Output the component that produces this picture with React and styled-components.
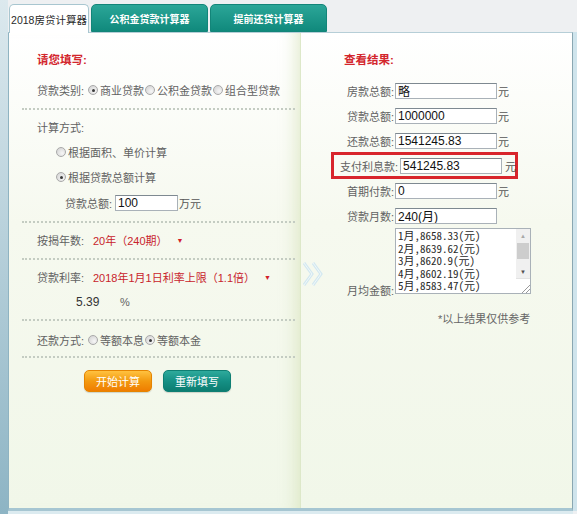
import React from "react";
import styled, { createGlobalStyle, css } from "styled-components";

const GlobalStyle = createGlobalStyle`
  html, body {
    margin: 0;
    padding: 0;
  }
  body {
    background: #eef0f2;
    font-family: "Liberation Sans", "Noto Sans CJK SC", sans-serif;
    font-size: 11px;
    color: #626262;
  }
`;

// 等额本金 schedule, 100万 / 240期 / 5.39%
const schedule = (() => {
  const principal = 1000000;
  const months = 240;
  const rate = 0.0539 / 12;
  const base = principal / months;
  const lines = [];
  for (let i = 0; i < months; i++) {
    const pay = base + (principal - base * i) * rate;
    lines.push(`${i + 1}月,${Math.round(pay * 100) / 100}(元)`);
  }
  return lines.join("\n");
})();

function App() {
  return (
    <>
      <GlobalStyle />
      <Page>
        <TabBar>
          <Tab $active $w={80}>2018房贷计算器</Tab>
          <Tab $w={117}>公积金贷款计算器</Tab>
          <Tab $w={117}>提前还贷计算器</Tab>
        </TabBar>
        <Panel>
          <Column $left>
            <Title>请您填写:</Title>

            <Row $mt={10}>
              <Label>贷款类别:</Label>
              <Radio $checked $first />
              <span>商业贷款</span>
              <Radio />
              <span>公积金贷款</span>
              <Radio />
              <span>组合型贷款</span>
            </Row>
            <Divider $mt={8} />

            <Row $mt={7}>
              <Label>计算方式:</Label>
            </Row>
            <Row $mt={5} $indent={46}>
              <Radio />
              <span>根据面积、单价计算</span>
            </Row>
            <Row $mt={5} $indent={46}>
              <Radio $checked />
              <span>根据贷款总额计算</span>
            </Row>
            <Row $mt={6} $indent={56}>
              <Label $w={50}>贷款总额:</Label>
              <TextInput $w={63} value="100" readOnly />
              <Unit>万元</Unit>
            </Row>
            <Divider $mt={8} />

            <Row $mt={7}>
              <Label $w={56}>按揭年数:</Label>
              <RedValue>20年（240期）</RedValue>
              <Caret>▼</Caret>
            </Row>
            <Divider $mt={8} />

            <Row $mt={7}>
              <Label $w={56}>贷款利率:</Label>
              <RedValue>2018年1月1日利率上限（1.1倍）</RedValue>
              <Caret>▼</Caret>
            </Row>
            <Row $mt={5} $indent={67}>
              <RateValue>5.39</RateValue>
              <span>%</span>
            </Row>
            <Divider $mt={7} />

            <Row $mt={9}>
              <Label>还款方式:</Label>
              <Radio $first />
              <span>等额本息</span>
              <Radio $checked />
              <span>等额本金</span>
            </Row>
            <Divider $mt={6} />

            <ButtonRow>
              <Button $tone="orange">开始计算</Button>
              <Button $tone="teal">重新填写</Button>
            </ButtonRow>
          </Column>

          <Column>
            <Chevrons width="22" height="24" viewBox="0 0 22 24">
              <polyline points="2,1 10,12 2,23" fill="none" stroke="#d3e8f0" strokeWidth="3" />
              <polyline points="2,1 10,12 2,23" fill="none" stroke="#f0f8fa" strokeWidth="1" />
              <polyline points="11,1 19,12 11,23" fill="none" stroke="#d3e8f0" strokeWidth="3" />
              <polyline points="11,1 19,12 11,23" fill="none" stroke="#f0f8fa" strokeWidth="1" />
            </Chevrons>
            <Title $right>查看结果:</Title>
            <Results>
              <ResultRow>
                <Label $w={50} $right>房款总额:</Label>
                <TextInput $w={102} value="略" readOnly />
                <Unit>元</Unit>
              </ResultRow>
              <ResultRow>
                <Label $w={50} $right>贷款总额:</Label>
                <TextInput $w={102} value="1000000" readOnly />
                <Unit>元</Unit>
              </ResultRow>
              <ResultRow>
                <Label $w={50} $right>还款总额:</Label>
                <TextInput $w={102} value="1541245.83" readOnly />
                <Unit>元</Unit>
              </ResultRow>
              <Highlight>
                <Label>支付利息款:</Label>
                <TextInput $w={102} value="541245.83" readOnly />
                <Unit>元</Unit>
              </Highlight>
              <ResultRow>
                <Label $w={50} $right>首期付款:</Label>
                <TextInput $w={102} value="0" readOnly />
                <Unit>元</Unit>
              </ResultRow>
              <ResultRow>
                <Label $w={50} $right>贷款月数:</Label>
                <TextInput $w={102} value="240(月)" readOnly />
              </ResultRow>
              <ListRow>
                <Label $w={50} $right>月均金额:</Label>
                <ListBox>
                  <Schedule value={schedule} readOnly />
                  <ScrollBar>
                    <Arrow>▲</Arrow>
                    <Track>
                      <Thumb />
                    </Track>
                    <Arrow $dark>▼</Arrow>
                    <Grip>
                      <svg width="10" height="10" viewBox="0 0 10 10">
                        <line x1="2" y1="10" x2="10" y2="2" stroke="#9a9a9a" strokeWidth="1" />
                        <line x1="6" y1="10" x2="10" y2="6" stroke="#9a9a9a" strokeWidth="1" />
                      </svg>
                    </Grip>
                  </ScrollBar>
                </ListBox>
              </ListRow>
            </Results>
            <Note>*以上结果仅供参考</Note>
          </Column>
        </Panel>
      </Page>
    </>
  );
}

const Page = styled.div`
  width: 577px;
  height: 514px;
  box-sizing: border-box;
  padding-top: 4px;
  border-left: 8px solid #b5d0da;
  border-image: linear-gradient(#dce9ee, #8db4c4) 1;
  display: flex;
  flex-direction: column;
`;

const TabBar = styled.div`
  display: flex;
  align-items: flex-end;
  gap: 2px;
  height: 28px;
  padding-left: 1px;
`;

const Tab = styled.div`
  position: relative;
  z-index: 1;
  width: ${p => p.$w}px;
  height: 28px;
  box-sizing: border-box;
  border-radius: 5px 5px 0 0;
  display: flex;
  align-items: center;
  justify-content: center;
  white-space: nowrap;
  font-size: 10px;
  font-weight: bold;
  color: #fff;
  border: 1px solid #138579;
  background: linear-gradient(#2ba698, #10897c);

  ${p => p.$active && css`
    height: 29px;
    margin-bottom: -1px;
    border: 1px solid #a8c6d0;
    border-bottom: none;
    background: #fff;
    color: #2a2a2a;
    font-weight: normal;
    font-size: 10.5px;
  `}
`;

const Panel = styled.div`
  flex: 1;
  display: grid;
  grid-template-columns: 292px 1fr;
  border-top: 1px solid #b6ced7;
  border-left: 1px solid #8fb3c1;
  border-right: 1px solid #8aa7b2;
  border-bottom: 3px solid #a6c6d2;
  margin-right: 4px;
  margin-bottom: 3px;
  box-shadow: 4px 0 0 #cfe4ec, 0 3px 0 #dcebf0;
`;

const Column = styled.div`
  position: relative;
  padding-top: 17px;
  background: linear-gradient(#ffffff, #f6f9ef 40%, #f1f7e9);

  ${p => p.$left && css`
    border-right: 1px solid #dde8c9;
    box-shadow: inset -18px 0 16px -14px rgba(205, 220, 170, 0.55);
  `}
`;

const Title = styled.div`
  height: 20px;
  line-height: 20px;
  padding-left: ${p => (p.$right ? 43 : 28)}px;
  color: #d3262d;
  font-size: 11.5px;
  font-weight: bold;
`;

const Row = styled.div`
  display: flex;
  align-items: center;
  height: 20px;
  margin-top: ${p => p.$mt || 0}px;
  padding-left: ${p => p.$indent || 28}px;
  white-space: nowrap;
`;

const Label = styled.span`
  flex-shrink: 0;
  white-space: nowrap;
  ${p => p.$w && css`width: ${p.$w}px;`}
  ${p => p.$right && css`text-align: right; margin-right: 1px;`}
`;

const Radio = styled.span`
  position: relative;
  flex-shrink: 0;
  width: 8px;
  height: 8px;
  border-radius: 50%;
  border: 1px solid #a9a9a9;
  background: radial-gradient(circle at 65% 65%, #f6f6f6, #cfcfcf);
  margin: 0 2px 0 ${p => (p.$first ? 4 : 1)}px;

  ${p => p.$checked && css`
    &::after {
      content: "";
      position: absolute;
      left: 2.5px;
      top: 2.5px;
      width: 3px;
      height: 3px;
      border-radius: 50%;
      background: #3a3a3a;
    }
  `}
`;

const Divider = styled.div`
  height: 0;
  border-top: 2px dotted #c4ccc2;
  margin: ${p => p.$mt}px 5px 0 13px;
`;

const TextInput = styled.input`
  width: ${p => p.$w}px;
  height: 16px;
  box-sizing: border-box;
  margin: 0;
  padding: 0 2px;
  border: 1px solid #a9b1b8;
  border-top-color: #7e8991;
  background: #fff;
  outline: none;
  font-family: "Liberation Sans", "Noto Sans CJK SC", sans-serif;
  font-size: 12px;
  color: #111;
`;

const Unit = styled.span`
  margin-left: 1px;
  color: #555;
`;

const RedValue = styled.span`
  color: #c8242c;
  font-size: 11px;
`;

const Caret = styled.span`
  margin-left: 9px;
  color: #d2202a;
  font-size: 7px;
`;

const RateValue = styled.span`
  width: 44px;
  font-size: 12px;
  color: #333;
`;

const ButtonRow = styled.div`
  display: flex;
  gap: 11px;
  margin-top: 12px;
  padding-left: 75px;
`;

const tones = {
  orange: css`
    background: linear-gradient(#ffc240, #f39a10 50%, #ef7d00);
    border-color: #e58400;
  `,
  teal: css`
    background: linear-gradient(#2eaa9c, #159085 50%, #0c7d71);
    border-color: #0f7f73;
  `,
};

const Button = styled.button`
  width: 68px;
  height: 22px;
  box-sizing: border-box;
  padding: 0;
  border: 1px solid;
  border-radius: 5px;
  color: #fff;
  font-family: "Liberation Sans", "Noto Sans CJK SC", sans-serif;
  font-size: 11px;
  cursor: pointer;
  box-shadow: 0 1px 1px rgba(0, 0, 0, 0.15);
  ${p => tones[p.$tone]}
`;

const Chevrons = styled.svg`
  position: absolute;
  left: 1px;
  top: 229px;
`;

const Results = styled.div`
  margin-top: 8px;
  display: flex;
  flex-direction: column;
`;

const ResultRow = styled.div`
  display: flex;
  align-items: center;
  height: 25px;
  padding-left: 43px;
  white-space: nowrap;
`;

const Highlight = styled.div`
  display: flex;
  align-items: center;
  gap: 2px;
  width: 187px;
  height: 27px;
  box-sizing: border-box;
  margin: -1px 0 -1px 30px;
  padding-left: 6px;
  border: 3px solid #d8252c;
  white-space: nowrap;
`;

const ListRow = styled.div`
  display: flex;
  align-items: flex-end;
  padding-left: 43px;

  ${Label} {
    margin-bottom: -4px;
  }
`;

const ListBox = styled.div`
  display: flex;
  width: 136px;
  height: 66px;
  box-sizing: border-box;
  border: 1px solid #a9b1b8;
  background: #fff;
`;

const Schedule = styled.textarea`
  flex: 1;
  min-width: 0;
  margin: 0;
  padding: 0 2px;
  border: none;
  background: #fff;
  outline: none;
  overflow: hidden;
  resize: none;
  font-family: "Noto Sans Mono CJK SC", "Liberation Mono", monospace;
  font-size: 11px;
  line-height: 12.6px;
  color: #2a2a2a;
`;

const ScrollBar = styled.div`
  width: 14px;
  display: flex;
  flex-direction: column;
  background: #f0f0f0;
`;

const Arrow = styled.div`
  height: 13px;
  display: flex;
  align-items: center;
  justify-content: center;
  font-size: 6px;
  color: ${p => (p.$dark ? "#505050" : "#a8a8a8")};
`;

const Track = styled.div`
  flex: 1;
  padding: 0 1px;
`;

const Thumb = styled.div`
  height: 16px;
  margin-top: 1px;
  background: #cdcdcd;
`;

const Grip = styled.div`
  height: 14px;
  display: flex;
  align-items: flex-end;
  justify-content: flex-end;
  background: #fff;
  border-top: 1px solid #e3e3e3;
`;

const Note = styled.div`
  margin-top: 16px;
  padding-left: 137px;
  font-size: 11px;
  color: #666;
`;

export default App;
